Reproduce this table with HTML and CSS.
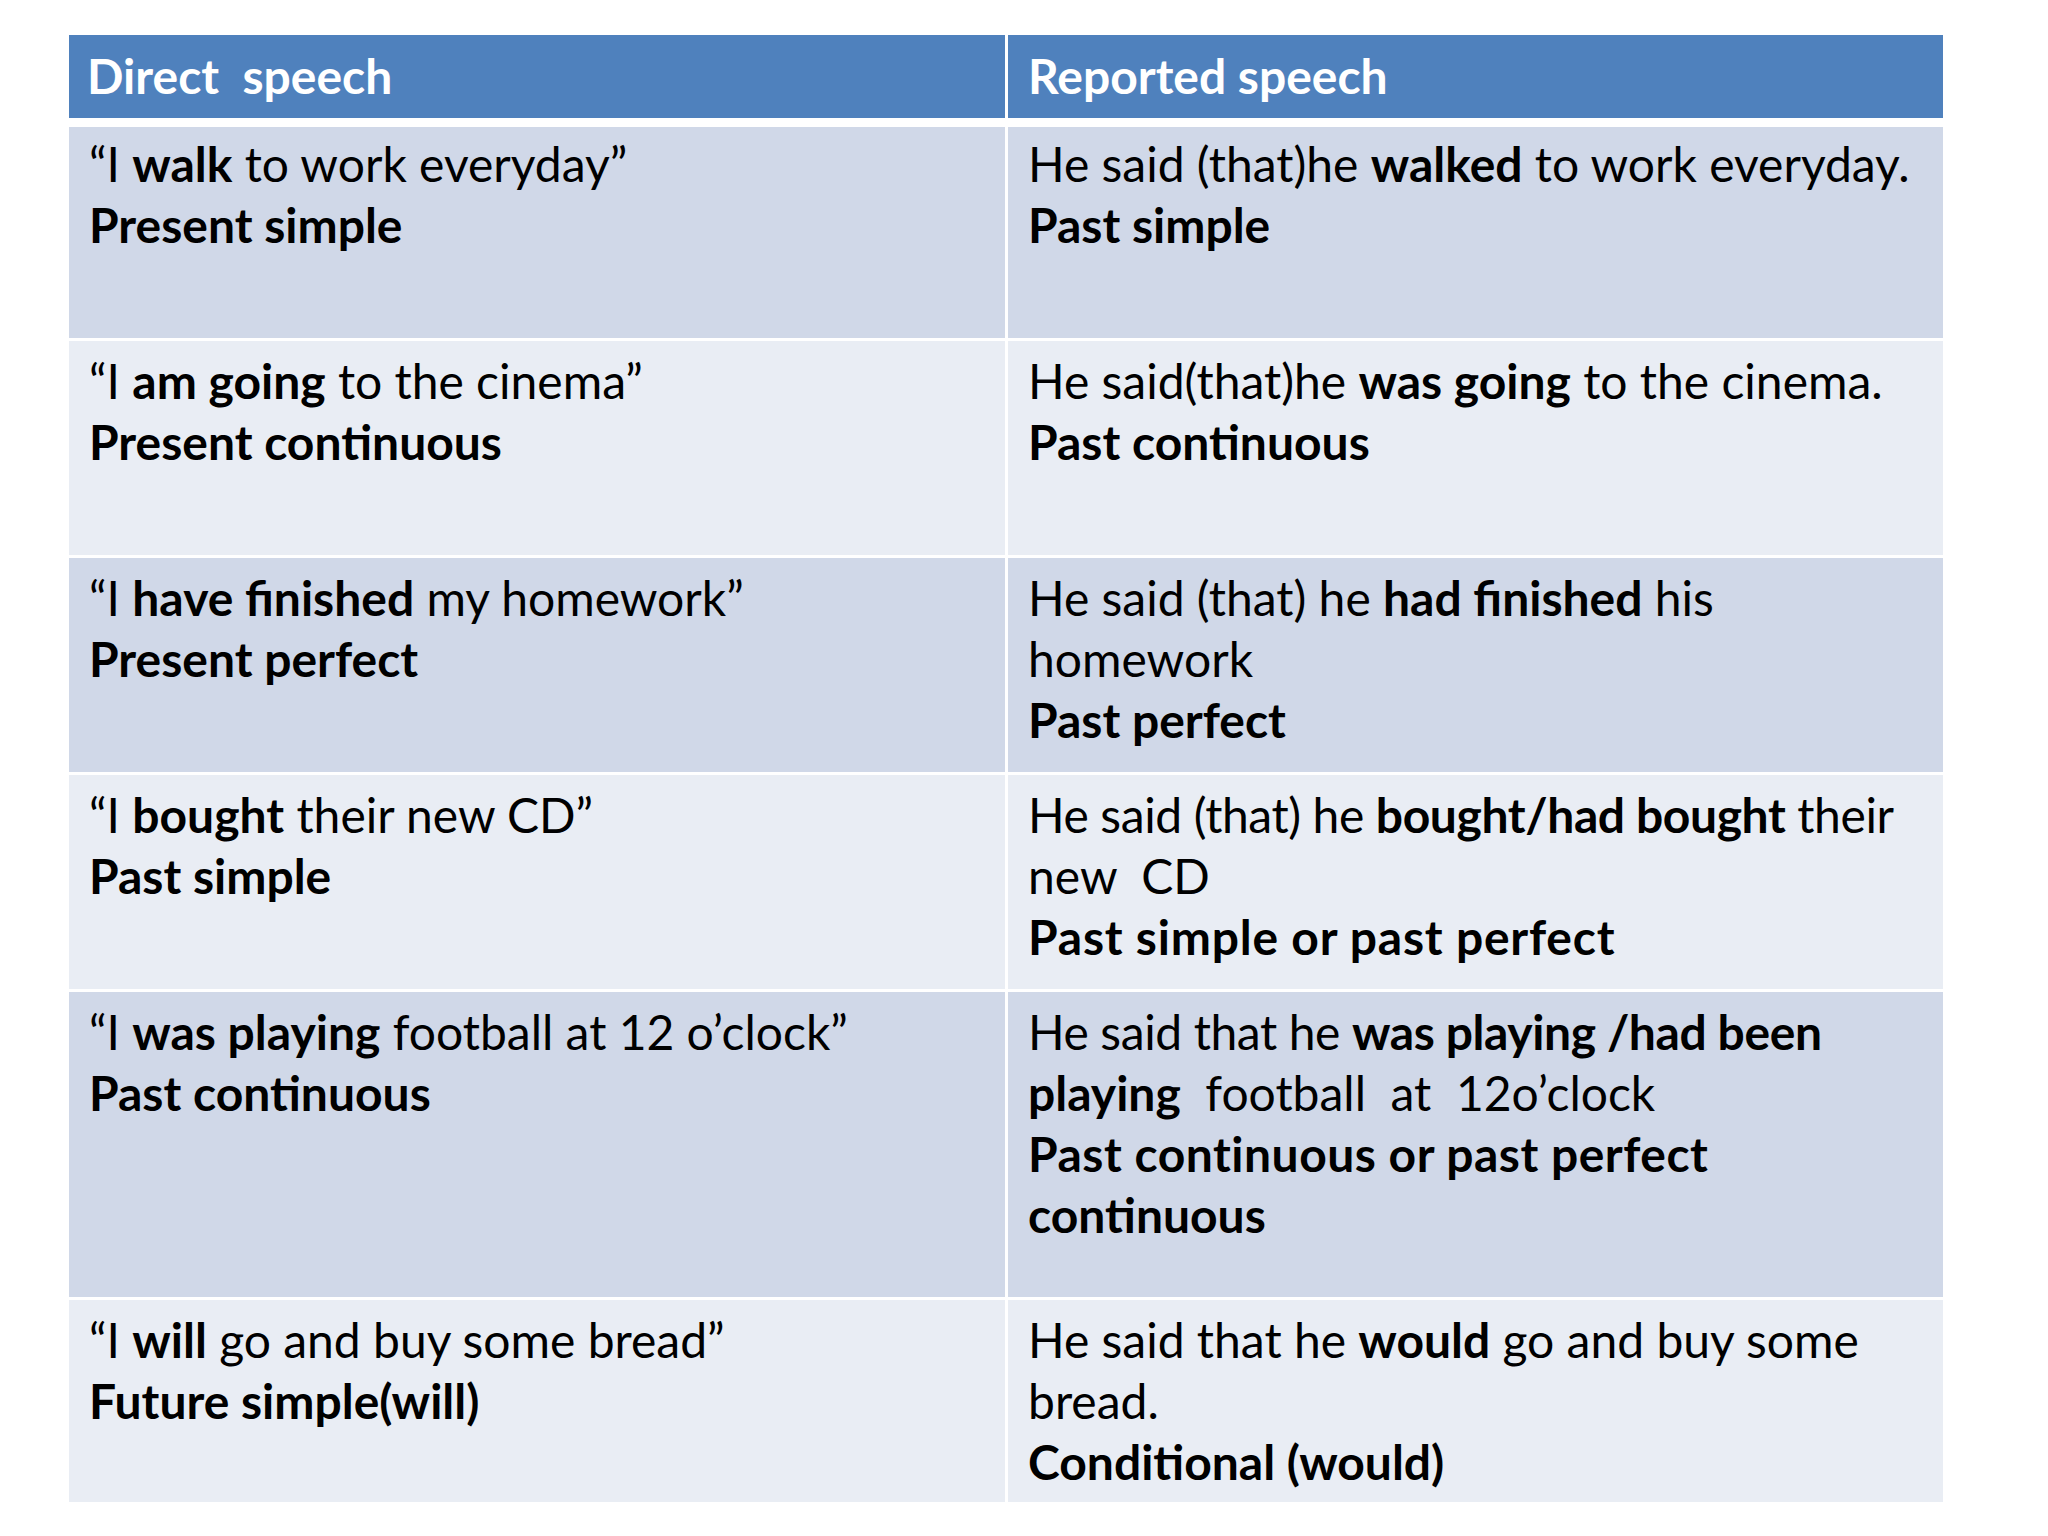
FILE: index.html
```html
<!DOCTYPE html>
<html lang="en">
<head>
<meta charset="utf-8">
<title>Direct and reported speech</title>
<link rel="stylesheet" href="styles.css">
</head>
<body>
<div class="table">
  <div class="cell head">Direct&nbsp; speech</div>
  <div class="cell head">Reported speech</div>

  <div class="cell odd first"><div class="ln">“I <b>walk</b> to work everyday”</div><div class="ln"><b>Present simple</b></div></div>
  <div class="cell odd first"><div class="ln">He said (that)he <b>walked</b> to work everyday.</div><div class="ln"><b>Past simple</b></div></div>

  <div class="cell even"><div class="ln">“I <b>am going</b> to the cinema”</div><div class="ln"><b>Present continuous</b></div></div>
  <div class="cell even"><div class="ln">He said(that)he <b>was going</b> to the cinema.</div><div class="ln"><b>Past continuous</b></div></div>

  <div class="cell odd"><div class="ln">“I <b>have finished</b> my homework”</div><div class="ln"><b>Present perfect</b></div></div>
  <div class="cell odd"><div class="ln">He said (that) he <b>had finished</b> his</div><div class="ln">homework</div><div class="ln"><b>Past perfect</b></div></div>

  <div class="cell even"><div class="ln">“I <b>bought</b> their new CD”</div><div class="ln"><b>Past simple</b></div></div>
  <div class="cell even"><div class="ln tight">He said (that) he <b>bought/had bought</b> their</div><div class="ln">new&nbsp; CD</div><div class="ln wide"><b>Past simple or past perfect</b></div></div>

  <div class="cell odd"><div class="ln">“I <b>was playing</b> football at 12 o’clock”</div><div class="ln"><b>Past continuous</b></div></div>
  <div class="cell odd"><div class="ln tight">He said that he <b>was playing /had been</b></div><div class="ln snug"><b>playing</b>&nbsp; football&nbsp; at&nbsp; 12o’clock</div><div class="ln wider"><b>Past continuous or past perfect</b></div><div class="ln"><b>continuous</b></div></div>

  <div class="cell even"><div class="ln">“I <b>will</b> go and buy some bread”</div><div class="ln"><b>Future simple(will)</b></div></div>
  <div class="cell even"><div class="ln">He said that he <b>would</b> go and buy some</div><div class="ln">bread.</div><div class="ln"><b>Conditional (would)</b></div></div>
</div>
</body>
</html>
```

FILE: styles.css
```css
html, body {
  margin: 0;
  padding: 0;
  background: #ffffff;
}

body {
  width: 2048px;
  height: 1536px;
  overflow: hidden;
  font-family: "Lato", "Open Sans", sans-serif;
  color: #000000;
}

.table {
  margin: 35px 0 0 69px;
  width: 1874px;
  display: grid;
  grid-template-columns: 936px 935px;
  grid-template-rows: 89px 211px 214px 214px 214px 305px 202px;
  column-gap: 3px;
  row-gap: 3px;
}

.cell {
  box-sizing: border-box;
  padding: 9px 12px 0 18px;
  font-size: 48px;
  line-height: 61px;
  white-space: nowrap;
}

.cell + .cell {
  padding-left: 20px;
}

.cell.first {
  padding-top: 6px;
}

.cell b {
  font-weight: 700;
}

.head {
  height: 83px;
  background: #4f81bd;
  color: #ffffff;
  font-weight: 700;
  padding-top: 10px;
}

.odd {
  background: #d0d8e8;
}

.even {
  background: #e9edf4;
}

.ln {
  display: block;
}

.tight {
  letter-spacing: -0.4px;
}

.snug {
  letter-spacing: 0;
}

.wide {
  letter-spacing: 0.78px;
}

.wider {
  letter-spacing: 0.5px;
}
```
